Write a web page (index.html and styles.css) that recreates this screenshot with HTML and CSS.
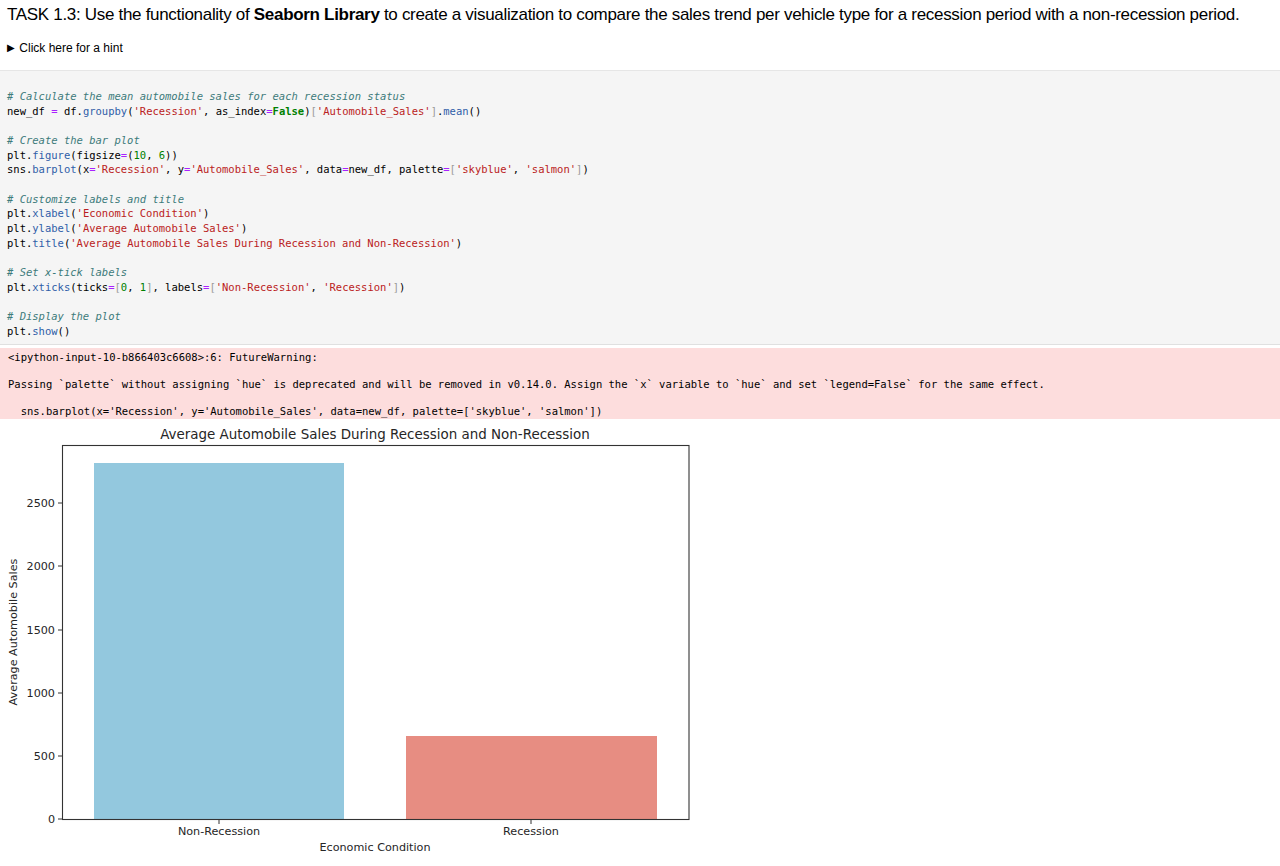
FILE: index.html
```html
<!DOCTYPE html>
<html>
<head>
<meta charset="utf-8">
<link rel="stylesheet" href="styles.css">
</head>
<body>
<div class="md">
  <p class="task">TASK 1.3: Use the functionality of <b>Seaborn Library</b> to create a visualization to compare the sales trend per vehicle type for a recession period with a non-recession period.</p>
  <div class="hint"><span class="tri">&#9654;</span> Click here for a hint</div>
</div>
<pre class="code"><span class="c"># Calculate the mean automobile sales for each recession status</span>
new_df <span class="o">=</span> df<span class="p">.</span><span class="f">groupby</span>(<span class="s">'Recession'</span>, as_index<span class="o">=</span><span class="k">False</span>)<span class="b">[</span><span class="s">'Automobile_Sales'</span><span class="b">]</span><span class="p">.</span><span class="f">mean</span>()

<span class="c"># Create the bar plot</span>
plt<span class="p">.</span><span class="f">figure</span>(figsize<span class="o">=</span>(<span class="n">10</span>, <span class="n">6</span>))
sns<span class="p">.</span><span class="f">barplot</span>(x<span class="o">=</span><span class="s">'Recession'</span>, y<span class="o">=</span><span class="s">'Automobile_Sales'</span>, data<span class="o">=</span>new_df, palette<span class="o">=</span><span class="b">[</span><span class="s">'skyblue'</span>, <span class="s">'salmon'</span><span class="b">]</span>)

<span class="c"># Customize labels and title</span>
plt<span class="p">.</span><span class="f">xlabel</span>(<span class="s">'Economic Condition'</span>)
plt<span class="p">.</span><span class="f">ylabel</span>(<span class="s">'Average Automobile Sales'</span>)
plt<span class="p">.</span><span class="f">title</span>(<span class="s">'Average Automobile Sales During Recession and Non-Recession'</span>)

<span class="c"># Set x-tick labels</span>
plt<span class="p">.</span><span class="f">xticks</span>(ticks<span class="o">=</span><span class="b">[</span><span class="n">0</span>, <span class="n">1</span><span class="b">]</span>, labels<span class="o">=</span><span class="b">[</span><span class="s">'Non-Recession'</span>, <span class="s">'Recession'</span><span class="b">]</span>)

<span class="c"># Display the plot</span>
plt<span class="p">.</span><span class="f">show</span>()</pre>
<pre class="stderr">&lt;ipython-input-10-b866403c6608&gt;:6: FutureWarning: 

Passing `palette` without assigning `hue` is deprecated and will be removed in v0.14.0. Assign the `x` variable to `hue` and set `legend=False` for the same effect.

  sns.barplot(x='Recession', y='Automobile_Sales', data=new_df, palette=['skyblue', 'salmon'])</pre>
<div class="plot">
<svg class="chart" width="700" height="440" viewBox="0 0 700 440" xmlns="http://www.w3.org/2000/svg">
  <text class="ttl" x="375" y="19" text-anchor="middle">Average Automobile Sales During Recession and Non-Recession</text>
  <rect x="94" y="43" width="250" height="356" fill="#93c8de"/>
  <rect x="406" y="316" width="251" height="83" fill="#e78d82"/>
  <rect x="62.5" y="25.5" width="626.5" height="374" fill="none" stroke="#333" stroke-width="1.1"/>
  <g stroke="#333" stroke-width="1">
    <line x1="58" y1="399" x2="62" y2="399"/>
    <line x1="58" y1="336" x2="62" y2="336"/>
    <line x1="58" y1="273" x2="62" y2="273"/>
    <line x1="58" y1="210" x2="62" y2="210"/>
    <line x1="58" y1="146" x2="62" y2="146"/>
    <line x1="58" y1="83" x2="62" y2="83"/>
    <line x1="219" y1="400" x2="219" y2="404"/>
    <line x1="531" y1="400" x2="531" y2="404"/>
  </g>
  <g class="tick" text-anchor="end">
    <text x="55" y="403">0</text>
    <text x="55" y="340">500</text>
    <text x="55" y="277">1000</text>
    <text x="55" y="214">1500</text>
    <text x="55" y="150">2000</text>
    <text x="55" y="87">2500</text>
  </g>
  <g class="tick" text-anchor="middle">
    <text x="219" y="415">Non-Recession</text>
    <text x="531" y="415">Recession</text>
  </g>
  <text class="lbl" x="375" y="431" text-anchor="middle">Economic Condition</text>
  <text class="lbl" transform="translate(17 212) rotate(-90)" text-anchor="middle">Average Automobile Sales</text>
</svg>
</div>
</body>
</html>
```
FILE: styles.css
```css
html, body {
  margin: 0;
  padding: 0;
  background: #fff;
}
body {
  font-family: "Liberation Sans", Arial, sans-serif;
  color: #000;
}
.md {
  padding: 5px 7px 0 7px;
}
.task {
  margin: 0;
  font-size: 17px;
  line-height: 20px;
  letter-spacing: -0.31px;
}
.task b {
  font-weight: bold;
}
.hint {
  margin-top: 16px;
  font-size: 12px;
  line-height: 14px;
  height: 29px;
}
.tri {
  font-size: 10px;
  position: relative;
  top: -1px;
  margin-right: 1px;
}
.code {
  margin: 0;
  background: #f5f5f5;
  border-top: 1px solid #e6e6e6;
  border-bottom: 1px solid #e0e0e0;
  padding: 18px 7px 6px 7px;
  font-family: "DejaVu Sans Mono", monospace;
  font-size: 10.5px;
  line-height: 14.65px;
  color: #000;
}
.c { color: #3d7b7b; font-style: italic; }
.s { color: #ba2121; }
.f { color: #2f5ea8; }
.o { color: #aa22ff; }
.k { color: #008000; font-weight: bold; }
.n { color: #008000; }
.b { color: #999; }
.p { color: #000; }
.stderr {
  margin: 3px 0 0 0;
  background: #fddddd;
  padding: 3px 8px 0 8px;
  font-family: "DejaVu Sans Mono", monospace;
  font-size: 10.5px;
  line-height: 13.5px;
  color: #000;
}
.plot {
  padding-top: 1px;
  height: 445px;
}
.chart {
  display: block;
}
.chart text {
  font-family: "DejaVu Sans", sans-serif;
  fill: #262626;
}
.chart .ttl {
  font-size: 13.45px;
}
.chart .tick {
  font-size: 11.2px;
}
.chart .lbl {
  font-size: 11.2px;
}
```
